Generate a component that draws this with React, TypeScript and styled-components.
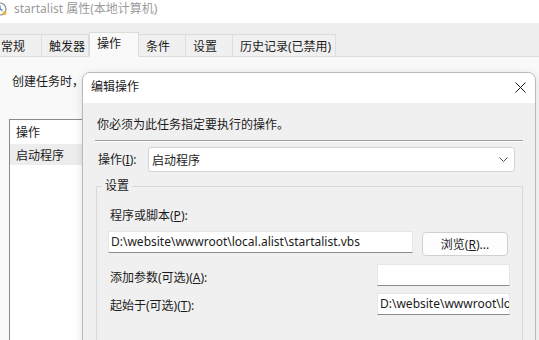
import React from 'react';
import styled, { createGlobalStyle } from 'styled-components';

const GlobalStyle = createGlobalStyle`
  html, body {
    margin: 0;
    padding: 0;
    background: #ffffff;
  }
  body {
    width: 539px;
    height: 340px;
    overflow: hidden;
    font-family: "Noto Sans", "Noto Sans CJK SC", sans-serif;
    font-size: 12px;
    color: #1b1b1b;
  }
  * { box-sizing: border-box; }
`;

const tabs = [
  { label: '常规', width: 48 },
  { label: '触发器', width: 47 },
  { label: '操作', width: 50, active: true },
  { label: '条件', width: 47 },
  { label: '设置', width: 47 },
  { label: '历史记录(已禁用)', width: 103 },
];

export default function App() {
  return (
    <>
      <GlobalStyle />
      <Window>
        <TitleBar>
          <AppIcon width="14" height="14" viewBox="0 0 14 14">
            <circle cx="7" cy="7" r="6" fill="#fff" stroke="#8a8a8a" strokeWidth="1.2" />
            <path d="M7 3.5V7l2.5 1.5" stroke="#3b6fb6" strokeWidth="1.2" fill="none" />
            <circle cx="11.5" cy="11" r="2" fill="#e8b93a" />
          </AppIcon>
          <TitleText>startalist 属性(本地计算机)</TitleText>
        </TitleBar>

        <TabStrip>
          {tabs.map((t) => (
            <Tab key={t.label} $width={t.width} $active={!!t.active}>
              {t.label}
            </Tab>
          ))}
        </TabStrip>

        <Page>
          <Intro>创建任务时，</Intro>
          <ListBox>
            <ListRow>操作</ListRow>
            <ListRow $selected>启动程序</ListRow>
          </ListBox>
        </Page>

        <Dialog>
          <DialogHeader>
            <DialogTitle>编辑操作</DialogTitle>
            <CloseButton>
              <svg width="11" height="11" viewBox="0 0 11 11">
                <path d="M0.5 0.5l10 10M10.5 0.5l-10 10" stroke="#1b1b1b" strokeWidth="1" />
              </svg>
            </CloseButton>
          </DialogHeader>
          <DialogBody>
            <Instruction>你必须为此任务指定要执行的操作。</Instruction>
            <Separator />
            <ActionRow>
              <ActionLabel>操作(<u>I</u>):</ActionLabel>
              <Combo>
                <span>启动程序</span>
                <svg width="9" height="5" viewBox="0 0 9 5">
                  <path d="M0.5 0.5l4 4 4-4" stroke="#555" strokeWidth="1" fill="none" />
                </svg>
              </Combo>
            </ActionRow>

            <GroupBox>
              <GroupLegend>设置</GroupLegend>
              <FieldLabel>程序或脚本(<u>P</u>):</FieldLabel>
              <ProgramRow>
                <TextInput $width={305}>D:\website\wwwroot\local.alist\startalist.vbs</TextInput>
                <BrowseButton>浏览(<u>R</u>)...</BrowseButton>
              </ProgramRow>
              <OptionRow $gap={8}>
                <OptionLabel $shift={6}>添加参数(可选)(<u>A</u>):</OptionLabel>
                <TextInput $width={133} />
              </OptionRow>
              <OptionRow $gap={7}>
                <OptionLabel $shift={5}>起始于(可选)(<u>T</u>):</OptionLabel>
                <TextInput $width={133}>D:\website\wwwroot\local.alist</TextInput>
              </OptionRow>
            </GroupBox>
          </DialogBody>
        </Dialog>
      </Window>
    </>
  );
}

const Window = styled.div`
  position: relative;
  width: 539px;
  height: 340px;
  overflow: hidden;
  display: flex;
  flex-direction: column;
`;

const TitleBar = styled.div`
  flex: none;
  height: 23px;
  display: flex;
  align-items: flex-start;
  padding-top: 1px;
  background: #ffffff;
`;

const AppIcon = styled.svg`
  margin-left: -7px;
  margin-top: 1px;
  flex: none;
`;

const TitleText = styled.span`
  margin-left: 7px;
  line-height: 15px;
  color: #9b9b9b;
`;

const TabStrip = styled.div`
  flex: none;
  height: 34px;
  display: flex;
  align-items: flex-end;
  background: #eeeeee;
  margin-left: -6px;
  border-bottom: 1px solid #dedede;
`;

const Tab = styled.div<{ $width: number; $active: boolean }>`
  width: ${(p) => p.$width}px;
  height: ${(p) => (p.$active ? 25 : 23)}px;
  margin-bottom: -1px;
  padding-left: 7px;
  display: flex;
  align-items: center;
  padding-bottom: ${(p) => (p.$active ? 3 : 0)}px;
  background: ${(p) => (p.$active ? '#f9f9f9' : '#f0f0f0')};
  border: 1px solid #dcdcdc;
  border-bottom-color: ${(p) => (p.$active ? '#f9f9f9' : '#dcdcdc')};
  border-left-width: ${(p) => (p.$active ? 1 : 0)}px;
  white-space: nowrap;
  color: #1b1b1b;
`;

const Page = styled.div`
  flex: 1;
  min-height: 0;
  background: #f9f9f9;
  padding: 17px 0 0 9px;
`;

const Intro = styled.div`
  line-height: 16px;
  padding-left: 3px;
  white-space: nowrap;
`;

const ListBox = styled.div`
  margin-top: 29px;
  width: 440px;
  height: 260px;
  background: #ffffff;
  border: 1px solid #8a8a8a;
`;

const ListRow = styled.div<{ $selected?: boolean }>`
  display: flex;
  height: ${(p) => (p.$selected ? 21 : 24)}px;
  align-items: center;
  padding-left: 6px;
  background: ${(p) => (p.$selected ? '#ededed' : 'transparent')};
  white-space: nowrap;
`;

const Dialog = styled.div`
  position: absolute;
  left: 82px;
  top: 72px;
  width: 454px;
  height: 300px;
  border: 1px solid #b9b9b9;
  border-radius: 8px;
  overflow: hidden;
  background: #f0f0f0;
  box-shadow: 0 2px 10px rgba(0, 0, 0, 0.12);
  display: flex;
  flex-direction: column;
`;

const DialogHeader = styled.div`
  flex: none;
  height: 30px;
  background: #ffffff;
  display: flex;
  align-items: center;
  justify-content: space-between;
  padding: 0 9px 2px 8px;
`;

const DialogTitle = styled.span`
  line-height: 16px;
`;

const CloseButton = styled.div`
  width: 11px;
  height: 11px;
  display: flex;
`;

const DialogBody = styled.div`
  flex: 1;
  padding: 14px 12px 0 12px;
  display: flex;
  flex-direction: column;
`;

const Instruction = styled.div`
  line-height: 16px;
  padding-left: 2px;
`;

const Separator = styled.div`
  flex: none;
  margin-top: 7px;
  height: 2px;
  width: 428px;
  border-top: 1px solid #a0a0a0;
  border-bottom: 1px solid #ffffff;
`;

const ActionRow = styled.div`
  margin-top: 5px;
  display: flex;
  align-items: center;
`;

const ActionLabel = styled.span`
  width: 53px;
  padding-left: 3px;
  line-height: 16px;
  flex: none;
`;

const Combo = styled.div`
  width: 367px;
  height: 25px;
  background: #ffffff;
  border: 1px solid #d4d4d4;
  border-radius: 3px;
  display: flex;
  align-items: center;
  justify-content: space-between;
  padding: 0 6px 0 3px;
`;

const GroupBox = styled.div`
  position: relative;
  flex: none;
  margin-top: 14px;
  margin-left: 1px;
  width: 427px;
  height: 200px;
  border: 1px solid #d9d9d9;
  padding: 21px 12px 0 11px;
  display: flex;
  flex-direction: column;
`;

const GroupLegend = styled.span`
  position: absolute;
  top: -9px;
  left: 5px;
  padding: 0 3px;
  line-height: 16px;
  background: #f0f0f0;
`;

const FieldLabel = styled.div`
  line-height: 16px;
  padding-left: 2px;
`;

const ProgramRow = styled.div`
  margin-top: 7px;
  display: flex;
  align-items: flex-start;
`;

const TextInput = styled.div<{ $width: number }>`
  width: ${(p) => p.$width}px;
  height: 22px;
  flex: none;
  background: #ffffff;
  border: 1px solid #e6e6e6;
  border-bottom-color: #8c8c8c;
  padding-left: 2px;
  line-height: 20px;
  white-space: nowrap;
  overflow: hidden;
`;

const BrowseButton = styled.div`
  margin-left: 9px;
  margin-top: 1px;
  width: 86px;
  height: 24px;
  background: #fdfdfd;
  border: 1px solid #d0d0d0;
  border-radius: 4px;
  display: flex;
  align-items: center;
  justify-content: center;
`;

const OptionRow = styled.div<{ $gap: number }>`
  margin-top: ${(p) => p.$gap}px;
  display: flex;
  align-items: flex-start;
  justify-content: space-between;
`;

const OptionLabel = styled.span<{ $shift: number }>`
  padding-top: ${(p) => p.$shift}px;
  padding-left: 2px;
  line-height: 16px;
`;
